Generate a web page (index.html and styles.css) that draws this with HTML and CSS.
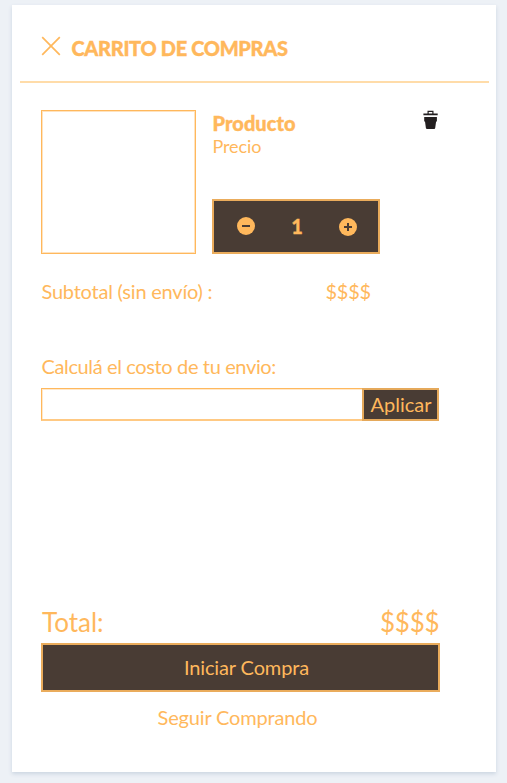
FILE: index.html
```html
<!DOCTYPE html>
<html lang="es">
<head>
<meta charset="utf-8">
<title>Carrito de compras</title>
<link rel="stylesheet" href="styles.css">
</head>
<body>
<main class="cart">
  <header class="cart-header">
    <svg class="close" width="20" height="20" viewBox="0 0 20 20"><path d="M1.2 1.2 18.8 18.8M18.8 1.2 1.2 18.8"/></svg>
    <h1 class="title">CARRITO DE COMPRAS</h1>
  </header>
  <div class="content">
    <section class="item">
      <div class="thumb"></div>
      <div class="details">
        <h2 class="name">Producto</h2>
        <p class="price">Precio</p>
        <div class="quantity">
          <svg class="step minus" width="18" height="18" viewBox="0 0 18 18"><circle cx="9" cy="9" r="9"/><path d="M5 9h8"/></svg>
          <span class="count">1</span>
          <svg class="step plus" width="18" height="18" viewBox="0 0 18 18"><circle cx="9" cy="9" r="9"/><path d="M5 9h8M9 5v8"/></svg>
        </div>
      </div>
      <svg class="trash" width="16" height="20" viewBox="0 0 16 20"><path d="M4.5 3.5V.7h6v2.8h4.2v1.8H.4V3.5zM5.7 1.9v1.6h3.6V1.9zM1.2 7h12.7v4.5h-.8L12.2 18q-.2 1-1 1H4q-.9 0-1.1-1L2 11.5h-.8z" fill-rule="evenodd"/></svg>
    </section>
    <div class="subtotal"><span class="subtotal-label">Subtotal (sin envío) :</span><span class="subtotal-value">$$$$</span></div>
    <p class="shipping-label">Calculá el costo de tu envio:</p>
    <div class="shipping"><div class="field"></div><div class="apply">Aplicar</div></div>
    <div class="total"><span class="total-label">Total:</span><span class="total-value">$$$$</span></div>
    <div class="checkout"><span class="checkout-text">Iniciar Compra</span></div>
    <div class="continue"><span class="continue-text">Seguir Comprando</span></div>
  </div>
</main>
</body>
</html>
```
FILE: styles.css
```css
* { box-sizing: border-box; }
body {
  margin: 0;
  height: 783px;
  padding: 4.5px 11px 11px 12px;
  overflow: hidden;
  background: #edf1f6;
  color: #ffb85c;
  font: 20px/24px Lato, sans-serif;
  white-space: nowrap;
}
h1, h2, p { margin: 0; font-size: 20px; line-height: 24px; }
.cart {
  height: 767.5px;
  padding: 0 7px 0 8px;
  background: #fff;
  box-shadow: 0 2px 4px #cbd5e1;
}
.cart-header {
  display: flex;
  align-items: flex-start;
  height: 78.5px;
  padding: 31px 0 0 21px;
  border-bottom: 2px solid #ffdca9;
}
.close { fill: none; stroke: #ffb85c; stroke-width: 1.7; }
.title { margin-left: 10.5px; font-weight: 900; letter-spacing: -.33px; -webkit-text-stroke: .4px #ffb85c; }
.content { width: 399px; margin-left: 21px; padding-top: 27px; }
.item { display: flex; height: 144px; }
.thumb { width: 155px; border: 1px solid #ffb85c; box-shadow: inset 0 0 0 1px #ffe3bf; }
.details { width: 168px; margin-left: 16px; padding-top: 1px; }
.name { padding-left: .5px; font-weight: 900; letter-spacing: .05px; -webkit-text-stroke: .4px #ffb85c; }
.price { padding-left: .5px; font-size: 18px; line-height: 22px; letter-spacing: -.1px; }
.quantity {
  display: flex;
  align-items: center;
  height: 55px;
  margin-top: 42px;
  padding: 0 21px 0 23px;
  justify-content: space-between;
  background: #493c34;
  border: 2px solid #eaac5c;
}
.count { margin-top: -2px; font-weight: 900; -webkit-text-stroke: .3px #ffb85c; }
.step { fill: #ffb85c; stroke: #493c34; stroke-width: 2; }
.step circle { stroke: none; }
.minus { margin-top: -1px; }
.trash { margin: 0 0 0 43px; fill: #231f20; }
.subtotal { display: flex; margin-top: 25px; padding-left: .5px; }
.subtotal-label { letter-spacing: -.22px; }
.subtotal-value { margin-left: auto; margin-right: 69px; letter-spacing: -.2px; }
.shipping-label { margin-top: 51px; padding-left: .5px; letter-spacing: -.37px; }
.shipping { display: flex; height: 33px; margin-top: 10px; }
.field { flex: 1; border: 1px solid #ffb85c; border-right: 0; border-bottom: 2px solid #ffc983; box-shadow: inset 1px 1px #ffe8cb; }
.apply { width: 77px; margin-right: 1px; padding-left: 1px; border: 2px solid #e5a95b; background: #493c34; text-align: center; line-height: 29px; }
.total { display: flex; justify-content: space-between; margin-top: 185px; padding: 0 .5px 0 1px; font-size: 26px; line-height: 32px; }
.total-value { letter-spacing: -.2px; }
.checkout { height: 49px; margin-top: 5px; padding-left: 12px; border: 2px solid #eaac5c; background: #493c34; text-align: center; line-height: 44px; letter-spacing: -.12px; }
.continue { margin-top: 13px; padding-right: 6px; text-align: center; letter-spacing: -.17px; }
```
